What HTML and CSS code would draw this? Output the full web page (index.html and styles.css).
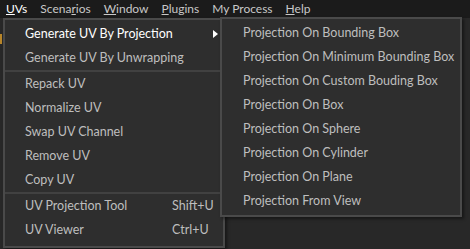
FILE: index.html
```html
<!DOCTYPE html>
<html lang="en">
<head>
  <meta charset="UTF-8">
  <title>UVs menu</title>
  <link rel="stylesheet" href="styles.css">
</head>
<body>
  <header class="menubar">
    <span class="menubar-item"><u>U</u>Vs</span>
    <span class="menubar-item">Scena<u>r</u>ios</span>
    <span class="menubar-item"><u>W</u>indow</span>
    <span class="menubar-item"><u>P</u>lugins</span>
    <span class="menubar-item">My Process</span>
    <span class="menubar-item"><u>H</u>elp</span>
  </header>

  <main class="workspace">
    <div class="edge-mark"></div>

    <ul class="menu main-menu">
      <li class="menu-item active">Generate UV By Projection <span class="arrow"></span></li>
      <li class="menu-item">Generate UV By Unwrapping</li>
      <li class="separator"></li>
      <li class="menu-item">Repack UV</li>
      <li class="menu-item">Normalize UV</li>
      <li class="menu-item">Swap UV Channel</li>
      <li class="menu-item">Remove UV</li>
      <li class="menu-item">Copy UV</li>
      <li class="separator"></li>
      <li class="menu-item">UV Projection Tool <span class="shortcut">Shift+U</span></li>
      <li class="menu-item">UV Viewer <span class="shortcut">Ctrl+U</span></li>
    </ul>

    <ul class="menu sub-menu">
      <li class="menu-item">Projection On Bounding Box</li>
      <li class="menu-item">Projection On Minimum Bounding Box</li>
      <li class="menu-item">Projection On Custom Bouding Box</li>
      <li class="menu-item">Projection On Box</li>
      <li class="menu-item">Projection On Sphere</li>
      <li class="menu-item">Projection On Cylinder</li>
      <li class="menu-item">Projection On Plane</li>
      <li class="menu-item">Projection From View</li>
    </ul>
  </main>
</body>
</html>
```

FILE: styles.css
```css
body {
  margin: 0;
  width: 470px;
  height: 249px;
  overflow: hidden;
  font-family: Lato, "Noto Sans", sans-serif;
  font-size: 12.5px;
  background-color: #282828;
  color: #bebebe;
}

.menubar {
  height: 18px;
  display: flex;
  align-items: center;
  gap: 13px;
  padding-left: 6px;
  background-color: #1b1b1b;
  color: #c8c8c8;
  font-size: 12px;
}

.menubar-item {
  line-height: 18px;
}

.menubar-item:first-child {
  color: #ffffff;
}

.workspace {
  position: relative;
  height: 231px;
}

.edge-mark {
  position: absolute;
  left: 0;
  top: 16px;
  width: 2px;
  height: 10px;
  background-color: #b8862a;
}

.menu {
  list-style: none;
  margin: 0;
  padding: 2px 0 4px;
  position: absolute;
  background-color: #2e2e2e;
  border: 2px solid #4a4a4a;
  box-shadow: 2px 2px 3px rgba(0, 0, 0, 0.45);
}

.main-menu {
  left: 3px;
  top: 0;
  width: 218px;
}

.sub-menu {
  left: 220px;
  top: -1px;
  width: 238px;
  padding-top: 2px;
  padding-bottom: 2px;
}

.menu-item {
  height: 24px;
  line-height: 24px;
  padding-left: 20px;
  position: relative;
  white-space: nowrap;
}

.sub-menu .menu-item {
  padding-left: 21px;
}

.menu-item.active {
  color: #ffffff;
}

.separator {
  height: 2px;
  margin: 0;
  background-color: #414141;
}

.shortcut {
  position: absolute;
  left: 167px;
}

.arrow {
  position: absolute;
  left: 208px;
  top: 8px;
  width: 0;
  height: 0;
  border-top: 4px solid transparent;
  border-bottom: 4px solid transparent;
  border-left: 5px solid #ffffff;
}
```
